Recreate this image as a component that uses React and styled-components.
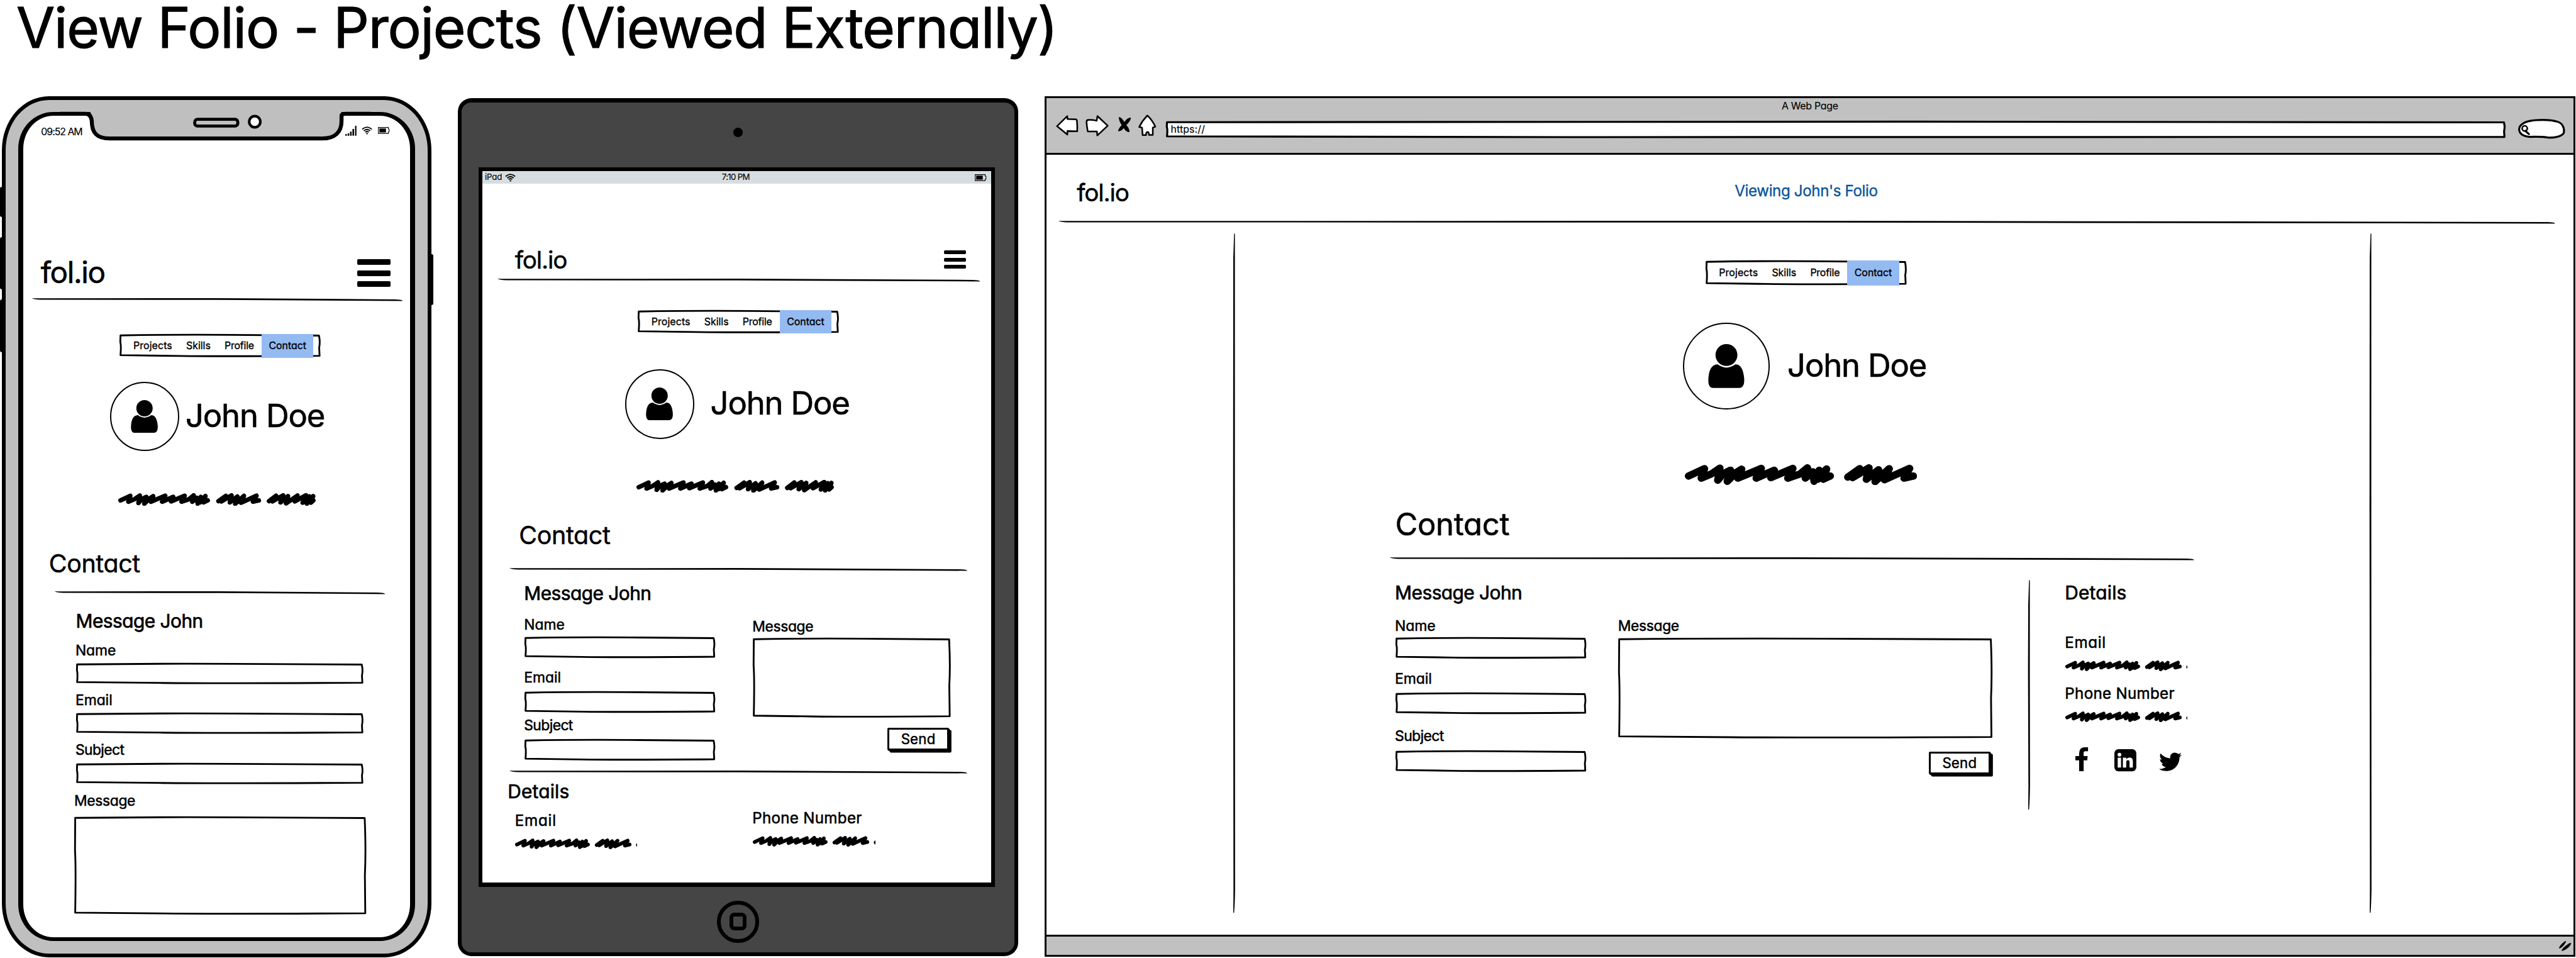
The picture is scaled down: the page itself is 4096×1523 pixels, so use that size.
import React from "react";
import styled, { createGlobalStyle, css } from "styled-components";
import { FaTwitter } from "react-icons/fa";

/* The wireframe is planned on a 6456-unit wide board; u() converts to pixels. */
const u = (n) => `${(n * 0.63445).toFixed(2)}px`;

const ink = "#000";
const chrome = "#c1c1c1";

const GlobalStyle = createGlobalStyle`
  *, *::before, *::after { box-sizing: border-box; }
  html, body { margin: 0; padding: 0; background: #fff; }
  body { overflow: hidden; }
  svg { display: block; flex: none; overflow: visible; }
`;

const place = css`
  margin-top: ${(p) => u(p.$t || 0)};
  margin-left: ${(p) => u(p.$l || 0)};
`;

const Board = styled.main`
  width: 4096px;
  height: 1523px;
  overflow: hidden;
  background: #fff;
  color: ${ink};
  font-family: "Inter", "Open Sans", sans-serif;
  font-feature-settings: "cv11";
`;

const Text = styled.div`
  ${place}
  width: max-content;
  font-size: ${(p) => u(p.$size || 36)};
  line-height: 0.7273em;
  letter-spacing: ${(p) => u(p.$ls || 0)};
  white-space: nowrap;
  color: ${(p) => p.$color || "inherit"};
  -webkit-text-stroke: ${(p) => p.$stroke || (p.$size >= 60 ? "0.013em" : "0.024em")} currentColor;
  stroke-linejoin: round;
`;

const Title = styled(Text).attrs({ as: "h1" })`
  margin: 0 0 0 ${u(41)};
  font-weight: 400;
`;

const Header = styled.header`
  height: ${u(241)};
  padding-top: ${u(18.500)};
`;

const Devices = styled.div`
  display: flex;
  align-items: flex-start;
  padding-left: ${u(5)};
`;

const Stack = styled.div`
  ${place}
  display: flex;
  flex-direction: column;
  align-items: flex-start;
  flex: none;
  width: ${(p) => (p.$w ? u(p.$w) : "auto")};
`;

const Row = styled.div`
  ${place}
  display: flex;
  align-items: ${(p) => p.$align || "flex-start"};
  gap: ${(p) => u(p.$gap || 0)};
`;

/* ---------- sketched primitives ---------- */

const Sketch = styled.svg`
  ${place}
`;

function SketchBox({ w, h, t, l, stroke = 4.5 }) {
  const d = `M2.5 3.5 Q${w * 0.3} 1 ${w * 0.55} 2.2 L${w - 4} 4
    Q${w - 0.5} ${h * 0.35} ${w - 3.5} ${h * 0.6} L${w - 2.5} ${h - 2.5}
    Q${w * 0.5} ${h - 0.5} ${w * 0.3} ${h - 2} L2.5 ${h - 4}
    Q4.5 ${h * 0.5} 2 ${h * 0.35} Z`;
  return (
    <Sketch $t={t} $l={l} width={w * 0.63445} height={h * 0.63445} viewBox={`0 0 ${w} ${h}`}>
      <path d={d} fill="#fff" stroke={ink} strokeWidth={stroke} strokeLinejoin="round" />
    </Sketch>
  );
}

function Divider({ w, t, l, drop = 3 }) {
  const d = `M0 0 Q10 .5 22 .5 L${w * 0.5} 0 L${w - 18} ${drop} Q${w - 4} ${drop} ${w} ${drop + 3}
    V${drop + 4} L${w * 0.5} 4.5 L22 4 Q6 3.5 0 0 Z`;
  return (
    <Sketch $t={t} $l={l} width={w * 0.63445} height={4 * 0.63445} viewBox={`0 0 ${w} 4`}>
      <path d={d} fill={ink} />
    </Sketch>
  );
}

function Rail({ h, t, l }) {
  const d = `M2 0 L4 0 L4 ${h * 0.4} L4.5 ${h - 60} Q4 ${h - 20} 2 ${h} L0 ${h} L0.5 ${h - 60} L-.5 ${h * 0.4} L0 60 Z`;
  return (
    <Sketch $t={t} $l={l} width={4 * 0.63445} height={h * 0.63445} viewBox={`0 0 4 ${h}`}>
      <path d={d} fill={ink} />
    </Sketch>
  );
}

const SCRIBBLE = [
  "M92 92 L152 64 L140 100 L178 84 L210 62 L202 108 L222 84 L250 70 L238 112 L270 80 L292 66 L278 100 L366 63 L347 100 L415 70 L402 98 L485 63 L466 100 L512 84 L540 61 L532 100 L560 76 L565 112 L584 70 L580 104 L612 65 L600 104 L626 92",
  "M692 96 L737 64 L710 98 L772 61 L762 104 L808 68 L795 113 L848 64 L830 106 L925 63 L904 100 L939 92",
  "M1002 96 L1045 63 L1022 98 L1088 61 L1072 104 L1118 66 L1106 110 L1176 62 L1160 98 L1228 60 L1208 106 L1250 68 L1234 112 L1272 66 L1258 106 L1273 92",
];

const ScribbleSvg = styled(Sketch)`
  overflow: hidden;
`;

function Scribble({ t, l, end = 996, w, h }) {
  return (
    <ScribbleSvg
      $t={t}
      $l={l}
      width={w * 0.63445}
      height={h * 0.63445}
      viewBox={`78 47 ${end - 78} 79`}
      preserveAspectRatio="none"
    >
      {SCRIBBLE.map((d) => (
        <path key={d} d={d} fill="none" stroke={ink} strokeWidth="28" strokeLinecap="round" strokeLinejoin="round" />
      ))}
    </ScribbleSvg>
  );
}

/* ---------- icons ---------- */

const Icon = ({ w, h, box, children, t, l }) => (
  <Sketch $t={t} $l={l} width={w * 0.63445} height={h * 0.63445} viewBox={box}>
    {children}
  </Sketch>
);

const Person = ({ w, h }) => (
  <Icon w={w} h={h} box="0 0 68 82">
    <ellipse cx="34.3" cy="20.5" rx="20.5" ry="20.5" />
    <path d="M18 38 Q34 50 51 38 C61 38 65 47 67 60 C69 74 66 82 58 82 H10 C2 82 -1 75 1 59 C3 46 8 38 18 38Z" />
  </Icon>
);

const Wifi = ({ w, h }) => (
  <Icon w={w} h={h} box="0 0 26 20">
    <g fill="none" stroke={ink} strokeWidth="2.9">
      <path d="M1 7 Q13 -3.5 25 7" />
      <path d="M5 11 Q13 3.8 21 11" />
      <path d="M8.6 14.6 Q13 10.6 17.4 14.6" />
    </g>
    <circle cx="13" cy="18" r="1.9" />
  </Icon>
);

const Signal = () => (
  <Icon w={28} h={25} box="0 0 28 25">
    <path d="M0 21h4v4H0zM6 19h4v6H6zM12 14.5h4V25h-4zM18 8h4v17h-4zM24.5 0H28v25h-3.500z" />
  </Icon>
);

const Battery = () => (
  <Icon w={29} h={17} box="0 0 29 17">
    <path d="M1 1 H26 V4.500 L28 5 V12 L26 12.500 V16 H1Z" fill="none" stroke={ink} strokeWidth="1.700" />
    <path d="M3.500 3.500H20V13.500H3.500z" />
  </Icon>
);

const Back = () => (
  <Icon w={56} h={52} box="51 82 168 156" t={-5}>
    <path d="M59 165 L136 90 L138 112 L202 114 Q209 116 209 128 Q213 170 211 204 L137 202 V229 Z" fill="#fff" stroke={ink} strokeWidth="12" strokeLinejoin="round" />
  </Icon>
);

const Forward = () => (
  <Icon w={58} h={53} box="273 83 174 159" t={-3}>
    <path d="M281 135 Q281 119 293 119 Q320 117 357 125 L363 90 L440 163 L362 236 L359 206 H290 Q283 170 281 135Z" fill="#fff" stroke={ink} strokeWidth="12" strokeLinejoin="round" />
  </Icon>
);

const Stop = () => (
  <Icon w={32} h={38} box="522 96 95 114" t={-9}>
    <path d="M527 96 Q545 96 568 134 Q590 100 616 101 Q620 118 583 158 Q608 185 606 210 Q585 212 563 180 Q542 206 522 203 Q520 185 548 157 Q524 120 527 96Z" />
  </Icon>
);

const Home = () => (
  <Icon w={45} h={54} box="670 78 135 163" t={-4}>
    <path d="M738 86 Q775 120 798 170 L779 178 V233 H750 Q750 210 740 210 Q728 210 728 234 H702 L698 178 L676 172 Q700 125 738 86Z" fill="#fff" stroke={ink} strokeWidth="12" strokeLinejoin="round" />
  </Icon>
);

const SearchPill = () => (
  <Icon w={118} h={50} box="0 0 118 50" t={12}>
    <path d="M12 12 Q24 2.500 62 2.500 Q104 3 111 16 Q117 26 114 36 Q106 47 76 47 Q60 44 28 45 Q3 42 2.500 26 Q3 17 12 12Z" fill="#fff" stroke={ink} strokeWidth="5" />
    <circle cx="16.500" cy="24" r="6.500" fill="none" stroke={ink} strokeWidth="4" />
    <path d="M18 30 L27 38" stroke={ink} strokeWidth="5" strokeLinecap="round" />
  </Icon>
);

const Facebook = () => (
  <Icon w={31.7} h={60} box="0 0 95 180">
    <path d="M95 0 V30 H76 Q62 30 62 43 V66 H92 L89 98 H62 V180 H28 V98 H0 V66 H28 V46 Q28 0 72 0Z" />
  </Icon>
);

const LinkedIn = () => (
  <Icon w={55} h={55.5} box="0 0 165 166" l={66}>
    <rect width="165" height="166" rx="30" />
    <g fill="#fff">
      <circle cx="38" cy="41" r="14" />
      <path d="M25 64H50V138H25z" />
      <path d="M64 64 H89 V75 Q98 62 115 62 Q139 62 139 92 V138 H114 V97 Q114 82 102 82 Q89 82 89 97 V138 H64z" />
    </g>
  </Icon>
);

const Twitter = styled(FaTwitter)`
  width: ${u(57)};
  height: ${u(57)};
  margin-left: ${u(58)};
  margin-bottom: ${u(-4)};
`;

/* ---------- shared page parts ---------- */

const Bars = styled.div`
  display: flex;
  flex-direction: column;
  justify-content: space-between;
  width: ${(p) => u(p.$w)};
  height: ${(p) => u(p.$h)};
  & > i {
    height: ${(p) => u(p.$bar)};
    background: ${ink};
    border-radius: ${u(3)};
  }
`;

const Hamburger = (p) => (
  <Bars $w={p.w} $h={p.h} $bar={p.bar}>
    <i />
    <i />
    <i />
  </Bars>
);

const BrandRow = styled.div`
  ${place}
  display: flex;
  justify-content: space-between;
  align-items: center;
  width: ${(p) => u(p.$w)};
  height: ${(p) => u(p.$h)};
`;

const NavFrame = styled.nav`
  ${place}
  display: grid;
  width: ${u(504)};
  & > * { grid-area: 1 / 1; }
`;

const NavItems = styled.div`
  display: flex;
  align-items: center;
  gap: ${u(35)};
  padding-left: ${u(34)};
  z-index: 1;
`;

const ActiveTab = styled.div`
  display: grid;
  place-items: center;
  width: ${u(130)};
  height: ${(p) => u(p.$h)};
  margin-left: ${u(-16)};
  background: #94baf2;
`;

const NavItem = (p) => <Text $size={25} {...p} />;

function Nav({ t, l, h = 57, tab = 59.5 }) {
  return (
    <NavFrame $t={t} $l={l}>
      <SketchBox w={504} h={h} />
      <NavItems>
        <NavItem $ls={0.2}>Projects</NavItem>
        <NavItem>Skills</NavItem>
        <NavItem $ls={-0.3}>Profile</NavItem>
        <ActiveTab $h={tab}>
          <NavItem>Contact</NavItem>
        </ActiveTab>
      </NavItems>
    </NavFrame>
  );
}

const Avatar = styled.div`
  display: grid;
  place-items: center;
  flex: none;
  width: ${(p) => u(p.$d)};
  height: ${(p) => u(p.$d)};
  border: ${u(4)} solid ${ink};
  border-radius: 50%;
`;

function Profile({ t, l, d, gap, scale = 1 }) {
  return (
    <Row $t={t} $l={l} $gap={gap} $align="center">
      <Avatar $d={d}>
        <Person w={68 * scale} h={82 * scale} />
      </Avatar>
      <Text $t={-2} $size={80} $ls={-1.8}>John Doe</Text>
    </Row>
  );
}

const SendBox = styled.button`
  ${place}
  display: grid;
  place-items: center;
  width: ${u(154)};
  height: ${u(57)};
  padding: 0;
  color: ${ink};
  font: inherit;
  font-feature-settings: inherit;
  background: #fff;
  border: ${u(4.800)} solid ${ink};
  border-radius: ${u(3)};
  box-shadow: ${u(2)} ${u(2)} 0 ${ink}, ${u(6)} ${u(5.500)} 0 ${ink};
`;

const Send = ({ t, l }) => (
  <SendBox $t={t} $l={l}>
    <Text $size={35} $ls={0.4}>Send</Text>
  </SendBox>
);

const Label = (p) => <Text $size={36} {...p} />;

/* ---------- phone ---------- */

const PhoneBody = styled.section`
  position: relative;
  flex: none;
  width: ${u(1076)};
  height: ${u(2158)};
  padding: ${u(30)} ${u(32)} ${u(31)} ${u(31)};
  background: #bfbfbf;
  border: ${u(10)} solid ${ink};
  border-radius: ${u(118)} / ${u(135)};
`;

const PhoneScreen = styled.div`
  width: 100%;
  height: 100%;
  overflow: hidden;
  background: #fff;
  border: ${u(12.700)} solid ${ink};
  border-top-width: ${u(10)};
  border-bottom-width: ${u(9.600)};
  border-radius: ${u(88)} / ${u(92)};
`;

const Notch = styled.svg`
  position: absolute;
  left: ${u(-14.500)};
  top: ${u(-250.500)};
`;

const SideKey = styled.i`
  position: absolute;
  top: ${(p) => u(p.$y)};
  ${(p) => (p.$right ? "right" : "left")}: ${u(-14.500)};
  width: ${u(10)};
  height: ${(p) => u(p.$h)};
  background: ${ink};
  border-radius: ${u(5)};
`;

const PhoneStatus = styled.div`
  display: flex;
  align-items: flex-end;
  justify-content: space-between;
  height: ${u(50)};
  padding: 0 ${u(51)} 0 ${u(45)};
`;

const StatusIcons = styled.div`
  display: flex;
  align-items: center;
  gap: ${u(13)};
`;

function Phone() {
  return (
    <PhoneBody>
      <SideKey $y={218} $h={75} />
      <SideKey $y={344} $h={130} />
      <SideKey $y={500} $h={132} />
      <SideKey $right $y={386} $h={128} />
      <PhoneScreen>
        <PhoneStatus>
          <Text $size={25} $ls={-1.6} $stroke="0.01em">09:52 AM</Text>
          <StatusIcons>
            <Signal />
            <Wifi w={27} h={20} />
            <Battery />
          </StatusIcons>
        </PhoneStatus>
        <Stack>
          <BrandRow $t={310} $l={44} $w={877} $h={69}>
            <Text $t={-3} $size={75} $ls={-2.1}>fol.io</Text>
            <Hamburger w={83} h={69} bar={14} />
          </BrandRow>
          <Divider t={29} l={21} w={931} />
          <Nav t={85} l={242} />
          <Profile t={61} l={218} d={173} gap={16} />
          <Scribble t={105} l={238} w={495} h={32} end={1288} />
          <Text $t={123.5} $l={64.5} $size={62} $ls={-0.5}>Contact</Text>
          <Divider t={46} l={78} w={830} />
          <Text $t={54} $l={132} $size={47} $ls={-0.8}>Message John</Text>
          <Label $t={43.8} $l={131}>Name</Label>
          <SketchBox t={17} l={133} w={720} h={52} />
          <Label $t={28} $l={131}>Email</Label>
          <SketchBox t={18} l={133} w={720} h={52} />
          <Label $t={29} $l={131} $ls={-0.9}>Subject</Label>
          <SketchBox t={19} l={133} w={720} h={52} />
          <Label $t={30} $l={128} $ls={-0.5}>Message</Label>
          <SketchBox t={27} l={128} w={732} h={245} />
        </Stack>
      </PhoneScreen>
      <Notch width={1086 * 0.63445} height={400 * 0.63445} viewBox="0 0 1086 400">
        <path d="M224 277 Q232 290 233 303 Q234 347 275 347 H812 Q856 347 856 303 V277Z" fill="#bfbfbf" />
        <path d="M150 285 H214 Q228 285 230 303 C230 332 242 347 275 347 H808 C838 347 856 332 856 303 V290 Q856 285 866 285 H930" fill="none" stroke={ink} strokeWidth="10" />
        <rect x="488" y="299" width="108" height="17" rx="7" fill="none" stroke={ink} strokeWidth="7.500" />
        <circle cx="638.500" cy="305" r="14" fill="#fff" stroke={ink} strokeWidth="6.500" />
      </Notch>
    </PhoneBody>
  );
}

/* ---------- tablet ---------- */

const TabletBody = styled.section`
  display: flex;
  flex-direction: column;
  align-items: center;
  flex: none;
  width: ${u(1404)};
  height: ${u(2150)};
  margin: ${u(5)} 0 0 ${u(67)};
  background: #454545;
  border: ${u(10)} solid ${ink};
  border-top-width: ${u(11.200)};
  border-radius: ${u(34)};
`;

const Lens = styled.i`
  width: ${u(23)};
  height: ${u(23)};
  margin: ${u(63.500)} 0 ${u(75.500)};
  background: ${ink};
  border-radius: 50%;
`;

const TabletScreen = styled.div`
  flex: none;
  width: ${u(1294)};
  height: ${u(1804)};
  margin-right: ${u(6)};
  background: #fff;
  border: ${u(10)} solid ${ink};
  border-bottom-width: ${u(11.200)};
`;

const TabletStatus = styled.div`
  display: grid;
  grid-template-columns: 1fr auto 1fr;
  align-items: center;
  height: ${u(32)};
  padding: ${u(1)} ${u(12)} 0 ${u(6)};
  background: #d6dde0;
  & > :last-child { justify-self: end; }
`;

const HomeButton = styled.div`
  display: grid;
  place-items: center;
  width: ${u(105)};
  height: ${u(105)};
  margin-top: ${u(34)};
  border: ${u(10)} solid ${ink};
  border-radius: 50%;
  &::after {
    content: "";
    width: ${u(43)};
    height: ${u(44)};
    border: ${u(9.600)} solid ${ink};
    border-radius: ${u(12)};
  }
`;

function Tablet() {
  return (
    <TabletBody>
      <Lens />
      <TabletScreen>
        <TabletStatus>
          <Row $gap={8} $align="center">
            <Text $size={21} $ls={-0.4} $stroke="0.01em">iPad</Text>
            <Wifi w={27} h={20} />
          </Row>
          <Text $size={21} $ls={-1.1} $stroke="0.01em">7:10 PM</Text>
          <Battery />
        </TabletStatus>
        <Stack $l={1}>
          <BrandRow $t={167.3} $l={80} $w={1131} $h={46}>
            <Text $size={61} $ls={-1.8}>fol.io</Text>
            <Hamburger w={55} h={46} bar={9.500} />
          </BrandRow>
          <Divider t={24} l={34} w={1212} />
          <Nav t={75} l={388} />
          <Profile t={89.5} l={356} d={174} gap={40} />
          <Scribble t={103} l={385} w={495} h={32} end={1288} />
          <Text $t={84.5} $l={90.5} $size={62} $ls={-0.5}>Contact</Text>
          <Divider t={58.5} l={64} w={1150} />
          <Text $t={44.5} $l={103} $size={47} $ls={-0.8}>Message John</Text>
          <Row>
            <Stack $l={104} $w={574}>
              <Label $t={47.8} $l={-1}>Name</Label>
              <SketchBox t={16} w={478} h={53} />
              <Label $t={36} $l={-1}>Email</Label>
              <SketchBox t={22} w={478} h={53} />
              <Label $t={19} $l={-1} $ls={-0.9}>Subject</Label>
              <SketchBox t={22} w={478} h={53} />
            </Stack>
            <Stack $w={500}>
              <Label $t={51.8} $l={-3} $ls={-0.5}>Message</Label>
              <SketchBox t={15.5} l={-1} w={496} h={199} />
              <Send t={26} l={336} />
            </Stack>
          </Row>
          <Divider t={26} l={64} w={1150} />
          <Text $t={32} $l={62} $size={47} $ls={0.3}>Details</Text>
          <Row>
            <Stack $l={80} $w={596}>
              <Text $t={40.5} $size={38} $ls={1.3}>Email</Text>
              <Scribble t={31} l={1} w={306} h={26.5} />
            </Stack>
            <Stack>
              <Text $t={34} $l={-1} $size={38} $ls={0.5}>Phone Number</Text>
              <Scribble t={31} l={1} w={306} h={26.5} />
            </Stack>
          </Row>
        </Stack>
      </TabletScreen>
      <HomeButton />
    </TabletBody>
  );
}

/* ---------- browser ---------- */

const BrowserBody = styled.section`
  display: flex;
  flex-direction: column;
  flex: none;
  width: ${u(3836)};
  height: ${u(2157)};
  margin-left: ${u(66)};
  background: #fff;
  border: ${u(5)} solid ${ink};
`;

const Toolbar = styled.div`
  display: flex;
  flex-direction: column;
  align-items: center;
  flex: none;
  height: ${u(142)};
  padding-top: ${u(11.500)};
  background: ${chrome};
  border-bottom: ${u(5)} solid ${ink};
`;

const Controls = styled.div`
  display: flex;
  align-items: center;
  align-self: stretch;
  height: ${u(60)};
  margin-top: ${u(11)};
  padding-left: ${u(24.500)};
`;

const Address = styled.div`
  display: grid;
  align-items: center;
  margin: ${u(14)} ${u(32)} 0 ${u(25)};
  & > * { grid-area: 1 / 1; }
`;

const AddressText = styled(Text)`
  z-index: 1;
  padding-left: ${u(12)};
`;

const SiteHeader = styled.div`
  display: grid;
  grid-template-columns: ${u(1649)} auto;
  flex: none;
  height: ${u(165)};
  padding: ${u(72)} 0 0 ${u(76)};
`;

const Page = styled.div`
  display: flex;
  flex: 1;
  padding-top: ${u(27)};
`;

const PageColumn = styled(Stack)`
  width: ${u(2844)};
`;

const StatusStrip = styled.div`
  display: flex;
  align-items: center;
  justify-content: flex-end;
  flex: none;
  height: ${u(51)};
  padding-right: ${u(5)};
  background: ${chrome};
  border-top: ${u(5)} solid ${ink};
`;

function Browser() {
  return (
    <BrowserBody>
      <Toolbar>
        <Text $size={25} $ls={-0.4} $stroke="0.01em">A Web Page</Text>
        <Controls>
          <Back />
          <Row $l={17}><Forward /></Row>
          <Row $l={25}><Stop /></Row>
          <Row $l={17}><Home /></Row>
          <Address>
            <SketchBox w={3357} h={43} stroke={5} />
            <AddressText $t={2} $size={25} $ls={0.2} $stroke="0.01em">https://</AddressText>
          </Address>
          <SearchPill />
        </Controls>
      </Toolbar>
      <SiteHeader>
        <Text $size={61} $ls={-1.8}>fol.io</Text>
        <Text $t={6} $size={38} $ls={-0.6} $color="#08549b" $stroke="0.015em">Viewing John's Folio</Text>
      </SiteHeader>
      <Divider l={25} w={3760} />
      <Page>
        <Rail l={469} h={1706} />
        <PageColumn>
          <Nav t={68.5} l={1178.5} h={61} tab={64} />
          <Profile t={92.5} l={1122} d={217} gap={45} scale={1.34} />
          <Scribble t={137} l={1127} w={582} h={52} end={953} />
          <Text $t={71} $l={401} $size={77} $ls={-0.3}>Contact</Text>
          <Divider t={55} l={385} w={2021} />
          <Row $t={52} $l={0.5}>
            <Stack $l={401} $w={559}>
              <Text $t={16.5} $l={-1} $size={47} $ls={-0.8}>Message John</Text>
              <Label $t={52} $l={-1}>Name</Label>
              <SketchBox t={16} w={478} h={53} />
              <Label $t={37} $l={-1}>Email</Label>
              <SketchBox t={22} w={478} h={53} />
              <Label $t={43} $l={-1} $ls={-0.9}>Subject</Label>
              <SketchBox t={22} w={478} h={53} />
            </Stack>
            <Stack $w={1027}>
              <Label $t={102.8} $l={-1} $ls={-0.5}>Message</Label>
              <SketchBox t={16} w={938} h={251} />
              <Send t={35} l={778} />
            </Stack>
            <Rail h={576} />
            <Stack $l={89}>
              <Text $t={16.5} $l={-1} $size={47} $ls={0.3}>Details</Text>
              <Text $t={93.5} $l={-1} $size={38} $ls={1.1}>Email</Text>
              <Scribble t={31} w={306} h={26.5} />
              <Text $t={42.5} $l={-1} $size={38} $ls={0.5}>Phone Number</Text>
              <Scribble t={31} w={306} h={26.5} />
              <Row $t={63.5} $l={25} $align="flex-end">
                <Facebook />
                <LinkedIn />
                <Twitter />
              </Row>
            </Stack>
          </Row>
        </PageColumn>
        <Rail h={1706} />
      </Page>
      <StatusStrip>
        <Icon w={31} h={25} box="639 486 95 77">
          <path d="M640 543 Q636 525 684 487 Q694 485 692 493 Q672 532 645 543Z M660 562 Q655 545 722 501 L734 504 Q715 545 665 562Z" />
        </Icon>
      </StatusStrip>
    </BrowserBody>
  );
}

export default function App() {
  return (
    <Board>
      <GlobalStyle />
      <Header>
        <Title $size={140} $ls={-1.9}>View Folio - Projects (Viewed Externally)</Title>
      </Header>
      <Devices>
        <Phone />
        <Tablet />
        <Browser />
      </Devices>
    </Board>
  );
}
